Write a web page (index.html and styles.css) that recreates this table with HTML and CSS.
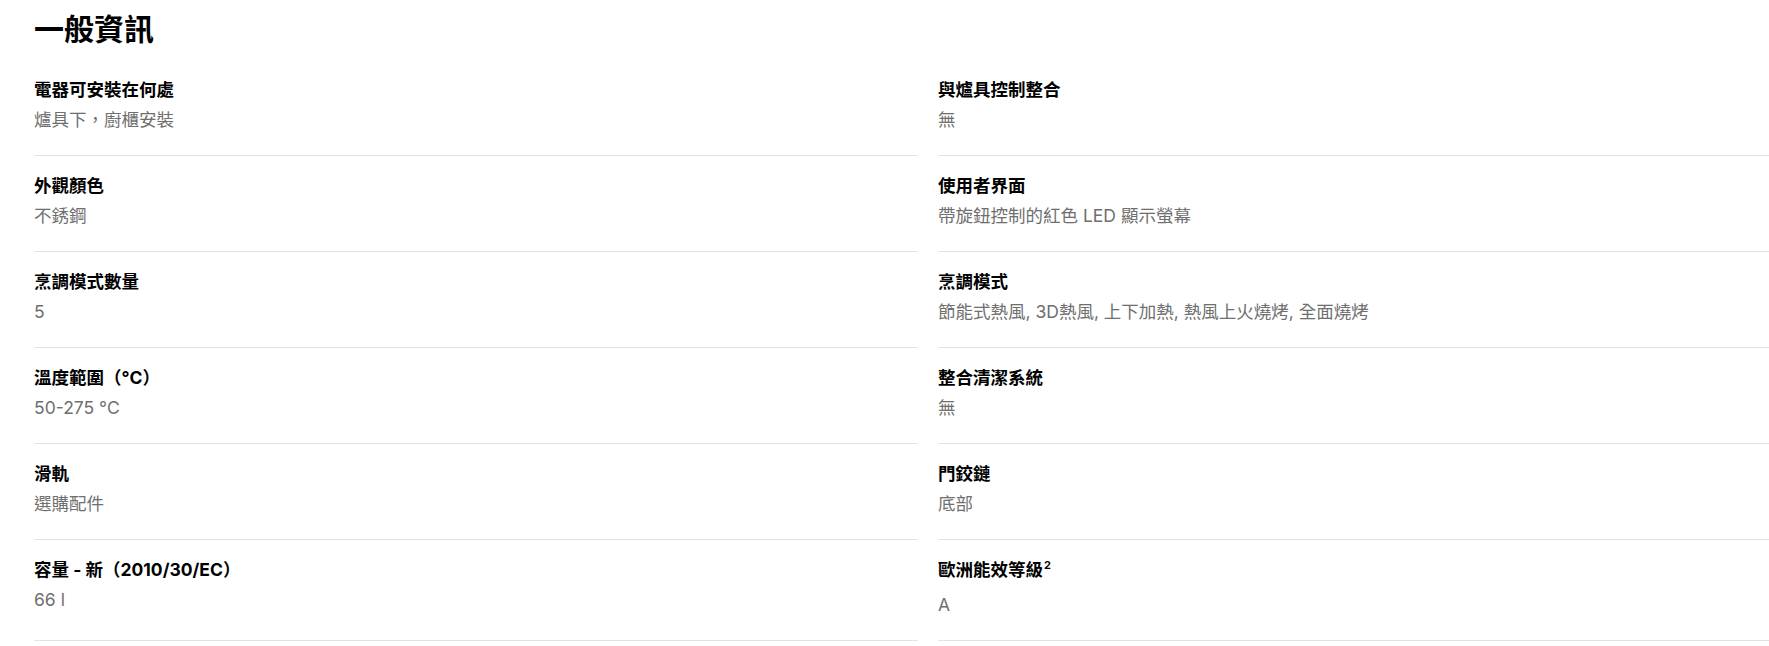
FILE: index.html
```html
<!DOCTYPE html>
<html lang="zh-Hant">
<head>
<meta charset="utf-8">
<title>一般資訊</title>
<link rel="stylesheet" href="styles.css">
</head>
<body>
<section class="section">
  <h2 class="title">一般資訊</h2>
  <dl class="specs">
    <div class="spec"><dt class="label">電器可安裝在何處</dt><dd class="value">爐具下，廚櫃安裝</dd></div>
    <div class="spec"><dt class="label">與爐具控制整合</dt><dd class="value">無</dd></div>
    <div class="spec"><dt class="label">外觀顏色</dt><dd class="value">不銹鋼</dd></div>
    <div class="spec"><dt class="label">使用者界面</dt><dd class="value">帶旋鈕控制的紅色 LED 顯示螢幕</dd></div>
    <div class="spec"><dt class="label">烹調模式數量</dt><dd class="value">5</dd></div>
    <div class="spec"><dt class="label">烹調模式</dt><dd class="value">節能式熱風, 3D熱風, 上下加熱, 熱風上火燒烤, 全面燒烤</dd></div>
    <div class="spec"><dt class="label">溫度範圍（°C）</dt><dd class="value">50-275 °C</dd></div>
    <div class="spec"><dt class="label">整合清潔系統</dt><dd class="value">無</dd></div>
    <div class="spec"><dt class="label">滑軌</dt><dd class="value">選購配件</dd></div>
    <div class="spec"><dt class="label">門鉸鏈</dt><dd class="value">底部</dd></div>
    <div class="spec"><dt class="label">容量 - 新（2010/30/EC）</dt><dd class="value">66 l</dd></div>
    <div class="spec"><dt class="label">歐洲能效等級<sup class="sup">2</sup></dt><dd class="value">A</dd></div>
  </dl>
</section>
</body>
</html>
```

FILE: styles.css
```css
html, body {
  margin: 0;
  padding: 0;
  background: #ffffff;
}

body {
  font-family: "Inter", "Noto Sans CJK TC", sans-serif;
  color: #000000;
}

.section {
  padding: 11px 0 0 34px;
}

.title {
  margin: 0 0 13px 0;
  font-size: 30px;
  line-height: 36px;
  font-weight: 700;
}

.specs {
  margin: 0;
  display: grid;
  grid-template-columns: 884px minmax(0, 1fr);
  column-gap: 20px;
}

.spec {
  padding: 17px 0 22px 0;
  border-bottom: 1px solid #e3e3e3;
}

.label {
  margin: 0;
  font-size: 17.5px;
  line-height: 26px;
  font-weight: 700;
  color: #000000;
}

.value {
  margin: 4px 0 0 0;
  font-size: 17.5px;
  line-height: 26px;
  font-weight: 400;
  color: #6f6f6f;
}

.sup {
  display: inline-block;
  vertical-align: top;
  font-size: 11px;
  line-height: 10px;
  padding: 3px 0 18px 1px;
  font-weight: 700;
}
```
